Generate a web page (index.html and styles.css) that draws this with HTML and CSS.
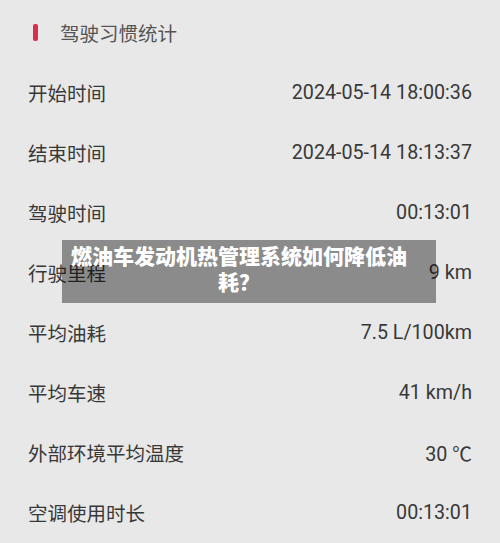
FILE: index.html
```html
<!DOCTYPE html>
<html lang="zh-CN">
  <head>
    <title>驾驶习惯统计</title>
    <meta charset="UTF-8" />
    <meta name="viewport" content="width=device-width, initial-scale=1.0" />
    <link rel="stylesheet" href="styles.css">
  </head>

  <body>
    <div class="page">
      <div class="header">
        <span class="header-mark"></span>
        <h1>驾驶习惯统计</h1>
      </div>

      <ul class="stats">
        <li class="row"><span class="label">开始时间</span><span class="value">2024-05-14 18:00:36</span></li>
        <li class="row"><span class="label">结束时间</span><span class="value">2024-05-14 18:13:37</span></li>
        <li class="row"><span class="label">驾驶时间</span><span class="value">00:13:01</span></li>
        <li class="row"><span class="label">行驶里程</span><span class="value">9 km</span></li>
        <li class="row"><span class="label">平均油耗</span><span class="value">7.5 L/100km</span></li>
        <li class="row"><span class="label">平均车速</span><span class="value">41 km/h</span></li>
        <li class="row"><span class="label">外部环境平均温度</span><span class="value">30 ℃</span></li>
        <li class="row"><span class="label">空调使用时长</span><span class="value">00:13:01</span></li>
      </ul>

      <div class="caption">燃油车发动机热管理系统如何降低油耗？</div>
    </div>
  </body>
</html>
```

FILE: styles.css
```css
body {
  margin: 0;
  background-color: #e8e8e8;
  font-family: Roboto, "Noto Sans CJK SC", sans-serif;
  color: #383838;
}

.page {
  position: relative;
  width: 500px;
  height: 543px;
  overflow: hidden;
}

.header {
  display: flex;
  align-items: center;
  height: 60px;
  margin-top: 2px;
  padding-left: 33px;
}

.header-mark {
  width: 5px;
  height: 17px;
  border-radius: 2px;
  background-color: #d8304c;
}

.header h1 {
  margin: 0 0 0 22px;
  font-size: 19.5px;
  font-weight: normal;
  color: #555;
}

.stats {
  list-style: none;
  margin: 0;
  padding: 0 28px;
}

.row {
  display: flex;
  justify-content: space-between;
  align-items: center;
  height: 60px;
}

.label {
  font-size: 19.5px;
}

.value {
  font-size: 19.7px;
}

.caption {
  position: absolute;
  top: 240px;
  left: 62px;
  width: 374px;
  height: 63px;
  box-sizing: border-box;
  padding: 4px 28px 0 8px;
  background-color: rgba(0, 0, 0, 0.4);
  color: #fff;
  font-size: 21px;
  font-weight: 900;
  line-height: 26px;
  text-align: center;
}
```
